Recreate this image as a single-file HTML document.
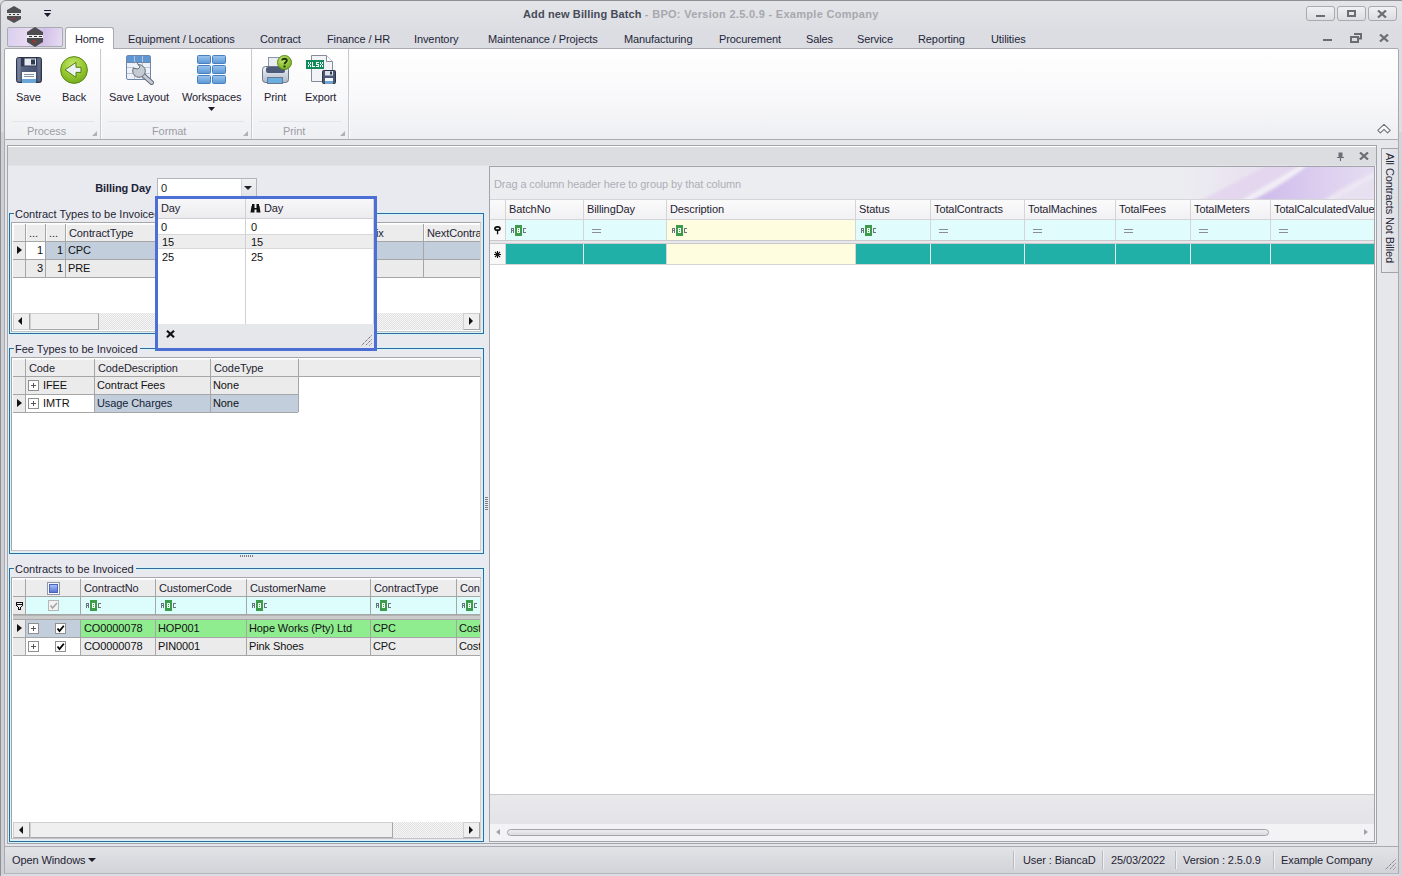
<!DOCTYPE html>
<html><head><meta charset="utf-8">
<style>
*{margin:0;padding:0;box-sizing:border-box}
html,body{width:1402px;height:876px;overflow:hidden;background:#dcdde2}
body{font-family:"Liberation Sans",sans-serif;font-size:11px;color:#1e1e1e;position:relative}
.a{position:absolute}
.t{position:absolute;white-space:nowrap;line-height:13px;letter-spacing:-.1px}
</style></head><body>
<div class="a" style="left:0px;top:0px;width:1405px;height:878px;background:linear-gradient(#e4e5e9,#dcdde2 30px,#dcdde2);border:1px solid #8e9096;border-radius:6px 4px 0 0;"></div>
<div class="a" style="left:1px;top:132px;width:3px;height:743px;background:#cfd0d5;"></div>
<div class="a" style="left:1399px;top:132px;width:3px;height:744px;background:#d3d4d9;"></div>
<svg class="a" style="left:6px;top:6px" width="16" height="17" viewBox="0 0 16 17">
<polygon points="8,0 15,4 15,13 8,17 1,13 1,4" fill="#505054"/>
<rect x="1" y="7" width="14" height="3" fill="#fff" opacity=".85"/>
<rect x="3" y="8" width="2" height="1" fill="#333"/><rect x="7" y="8" width="2" height="1" fill="#333"/><rect x="11" y="8" width="2" height="1" fill="#333"/>
<circle cx="7" cy="12.5" r="1.5" fill="#8a3a3a"/>
</svg>
<svg class="a" style="left:44px;top:10px" width="8" height="8" viewBox="0 0 8 8"><rect x="0" y="0" width="7" height="1" fill="#1a1a2a"/><polygon points="0,3 7,3 3.5,7" fill="#1a1a2a"/></svg>
<div class="t" style="left:523px;top:8px;font-weight:bold;color:#464b5a;letter-spacing:.12px">Add new Billing Batch <span style="color:#a7a8ae;letter-spacing:.3px">- BPO: Version 2.5.0.9 - Example Company</span></div>
<div class="a" style="left:1306px;top:6px;width:29px;height:15px;background:linear-gradient(#f0f1f4,#dcdde2);border:1px solid #a9aab0;border-radius:3px;"></div>
<div class="a" style="left:1337px;top:6px;width:29px;height:15px;background:linear-gradient(#f0f1f4,#dcdde2);border:1px solid #a9aab0;border-radius:3px;"></div>
<div class="a" style="left:1368px;top:6px;width:29px;height:15px;background:linear-gradient(#f0f1f4,#dcdde2);border:1px solid #a9aab0;border-radius:3px;"></div>
<div class="a" style="left:1316px;top:15px;width:9px;height:2px;background:#6b6c73;"></div>
<div class="a" style="left:1347px;top:10px;width:9px;height:7px;background:transparent;border:2px solid #6b6c73;"></div>
<svg class="a" style="left:1377px;top:10px" width="10" height="8" viewBox="0 0 10 8"><path d="M1,0.5 L9,7.5 M9,0.5 L1,7.5" stroke="#6b6c73" stroke-width="2.2"/></svg>
<div class="a" style="left:7px;top:27px;width:56px;height:20px;background:linear-gradient(100deg,#d8d0ee,#e9d9f2 35%,#d3c0e8 65%,#e6dcf2);border:1px solid #a9aab2;border-radius:2px;"></div>
<svg class="a" style="left:26px;top:27px" width="18" height="20" viewBox="0 0 18 20">
<polygon points="9,0 17,5 17,15 9,20 1,15 1,5" fill="#4d4d50"/>
<rect x="1" y="8" width="16" height="3" fill="#fff" opacity=".9"/>
<rect x="3" y="9" width="3" height="1" fill="#333"/><rect x="8" y="9" width="3" height="1" fill="#333"/><rect x="13" y="9" width="3" height="1" fill="#333"/>
<circle cx="8" cy="14.5" r="2" fill="#8a3a3a"/>
</svg>
<div class="a" style="left:4px;top:48px;width:1395px;height:92px;background:linear-gradient(#ffffff,#f8f8fa 55%,#eeeff2);border:1px solid #a9aab0;border-radius:2px 2px 0 0;"></div>
<div class="a" style="left:65px;top:27px;width:49px;height:22px;background:#fff;border:1px solid #a9aab0;border-bottom:none;border-radius:3px 3px 0 0;"></div>
<div class="t" style="left:75px;top:33px;color:#23263a;">Home</div>
<div class="t" style="left:128px;top:33px;color:#23263a;">Equipment / Locations</div>
<div class="t" style="left:260px;top:33px;color:#23263a;">Contract</div>
<div class="t" style="left:327px;top:33px;color:#23263a;">Finance / HR</div>
<div class="t" style="left:414px;top:33px;color:#23263a;">Inventory</div>
<div class="t" style="left:488px;top:33px;color:#23263a;">Maintenance / Projects</div>
<div class="t" style="left:624px;top:33px;color:#23263a;">Manufacturing</div>
<div class="t" style="left:719px;top:33px;color:#23263a;">Procurement</div>
<div class="t" style="left:806px;top:33px;color:#23263a;">Sales</div>
<div class="t" style="left:857px;top:33px;color:#23263a;">Service</div>
<div class="t" style="left:918px;top:33px;color:#23263a;">Reporting</div>
<div class="t" style="left:991px;top:33px;color:#23263a;">Utilities</div>
<div class="a" style="left:1323px;top:39px;width:9px;height:2px;background:#6b6c73;"></div>
<svg class="a" style="left:1350px;top:33px" width="12" height="10" viewBox="0 0 12 10"><path d="M4,1 H11 V5.5 H8 M1,4 H8 V9 H1 Z" stroke="#6b6c73" stroke-width="2" fill="none"/></svg>
<svg class="a" style="left:1379px;top:34px" width="10" height="8" viewBox="0 0 10 8"><path d="M1,0.5 L9,7.5 M9,0.5 L1,7.5" stroke="#6b6c73" stroke-width="2.2"/></svg>
<div class="a" style="left:100px;top:49px;width:1px;height:90px;background:#c9cacf;"></div>
<div class="a" style="left:101px;top:49px;width:1px;height:90px;background:#fbfbfc;"></div>
<div class="a" style="left:251px;top:49px;width:1px;height:90px;background:#c9cacf;"></div>
<div class="a" style="left:252px;top:49px;width:1px;height:90px;background:#fbfbfc;"></div>
<div class="a" style="left:348px;top:49px;width:1px;height:90px;background:#c9cacf;"></div>
<div class="a" style="left:349px;top:49px;width:1px;height:90px;background:#fbfbfc;"></div>
<div class="a" style="left:12px;top:121px;width:82px;height:1px;background:#e4e5e8;"></div>
<div class="a" style="left:108px;top:121px;width:136px;height:1px;background:#e4e5e8;"></div>
<div class="a" style="left:259px;top:121px;width:82px;height:1px;background:#e4e5e8;"></div>
<div class="t" style="left:16px;top:91px;color:#1e2130;">Save</div>
<div class="t" style="left:62px;top:91px;color:#1e2130;">Back</div>
<div class="t" style="left:109px;top:91px;color:#1e2130;">Save Layout</div>
<div class="t" style="left:182px;top:91px;color:#1e2130;">Workspaces</div>
<div class="t" style="left:264px;top:91px;color:#1e2130;">Print</div>
<div class="t" style="left:305px;top:91px;color:#1e2130;">Export</div>
<div class="t" style="left:27px;top:125px;color:#9c9da6;">Process</div>
<div class="t" style="left:152px;top:125px;color:#9c9da6;">Format</div>
<div class="t" style="left:283px;top:125px;color:#9c9da6;">Print</div>
<!-- Save -->
<svg class="a" style="left:16px;top:57px" width="26" height="26" viewBox="0 0 26 26">
<defs><linearGradient id="fl" x1="0" y1="0" x2="1" y2="1"><stop offset="0" stop-color="#6b7894"/><stop offset=".5" stop-color="#4f5b78"/><stop offset="1" stop-color="#3c465f"/></linearGradient></defs>
<rect x=".5" y=".5" width="25" height="25" rx="2" fill="url(#fl)" stroke="#2e3548"/>
<rect x="1.5" y="1.5" width="3" height="23" fill="#8591aa" opacity=".6"/>
<rect x="21.5" y="1.5" width="3" height="23" fill="#8591aa" opacity=".4"/>
<rect x="5" y="0.5" width="16" height="9" rx="1" fill="#2f3650"/>
<rect x="8.5" y="1.5" width="11.5" height="7" fill="#e6eaf0"/>
<rect x="15" y="2.5" width="4" height="5" fill="#2f3a55"/>
<rect x="6" y="15" width="14" height="11" fill="#f7f9fb"/>
<rect x="6" y="22" width="14" height="4" fill="#6aa6d6"/>
<path d="M8,17.5 H18 M8,19.5 H18" stroke="#8a93a5" stroke-width="1"/>
</svg>
<!-- Back -->
<svg class="a" style="left:60px;top:56px" width="28" height="28" viewBox="0 0 28 28">
<defs><radialGradient id="bk" cx=".45" cy=".3" r=".75"><stop offset="0" stop-color="#c5e86a"/><stop offset=".6" stop-color="#92c52e"/><stop offset="1" stop-color="#70a51a"/></radialGradient></defs>
<circle cx="14" cy="14" r="13.4" fill="url(#bk)" stroke="#5a8c16" stroke-width="1"/>
<polygon points="5,13.8 16,6.4 16,11.3 21,11.3 21,16.4 16,16.4 16,21.4" fill="#eef1f4" stroke="#4f7f13" stroke-width="1" stroke-linejoin="round"/>
</svg>
<!-- Save Layout -->
<svg class="a" style="left:125px;top:54px" width="30" height="31" viewBox="0 0 30 31">
<rect x="1.5" y="1.5" width="24" height="24" rx="1.5" fill="#eef2f8" stroke="#6f86a8"/>
<rect x="2" y="2" width="23" height="6" fill="#5f97d2"/>
<path d="M2,13.5 H25 M2,19.5 H25 M9.5,2 V25 M17.5,2 V25" stroke="#b9c5d6" stroke-width="1"/>
<path d="M2,8.5 H25" stroke="#6f86a8"/>
<line x1="17.5" y1="20.5" x2="26.5" y2="28.5" stroke="#656e7a" stroke-width="5" stroke-linecap="round"/>
<line x1="17.5" y1="20.5" x2="26.5" y2="28.5" stroke="#c5cbd3" stroke-width="3" stroke-linecap="round"/>
<circle cx="14" cy="17" r="6.3" fill="#c5cbd3" stroke="#656e7a" stroke-width="1"/>
<polygon points="6.5,12.5 10.5,8.5 15,13 13,15" fill="#eef2f8"/>
<path d="M8.2,14.2 L13,15 L15,13 L12,8.5" stroke="#656e7a" stroke-width="1" fill="none"/>
</svg>
<!-- Workspaces -->
<svg class="a" style="left:197px;top:55px" width="30" height="30" viewBox="0 0 30 30">
<defs><linearGradient id="ws" x1="0" y1="0" x2="0" y2="1"><stop offset="0" stop-color="#9cc6ee"/><stop offset="1" stop-color="#5a97d6"/></linearGradient></defs>
<g fill="url(#ws)" stroke="#4a80bf" stroke-width="1">
<rect x=".5" y=".5" width="13" height="8" rx="1"/><rect x="15.5" y=".5" width="13" height="8" rx="1"/>
<rect x=".5" y="10.5" width="13" height="8" rx="1"/><rect x="15.5" y="10.5" width="13" height="8" rx="1"/>
<rect x=".5" y="20.5" width="13" height="8" rx="1"/><rect x="15.5" y="20.5" width="13" height="8" rx="1"/>
</g></svg>
<svg class="a" style="left:208px;top:107px" width="7" height="4" viewBox="0 0 7 4"><polygon points="0,0 7,0 3.5,4" fill="#1e1e28"/></svg>
<!-- Print -->
<svg class="a" style="left:261px;top:54px" width="32" height="31" viewBox="0 0 32 31">
<defs><linearGradient id="pr" x1="0" y1="0" x2="0" y2="1"><stop offset="0" stop-color="#f2f4f8"/><stop offset="1" stop-color="#aeb8c8"/></linearGradient>
<radialGradient id="qb" cx=".4" cy=".3" r=".8"><stop offset="0" stop-color="#c8e870"/><stop offset="1" stop-color="#6fa61a"/></radialGradient></defs>
<rect x="7.5" y="3.5" width="11" height="11" fill="#e9edf2" stroke="#8a96aa"/>
<rect x="1.5" y="12.5" width="26" height="16" rx="3" fill="url(#pr)" stroke="#6c7890"/>
<rect x="5" y="13" width="19" height="6" rx="2" fill="#4d5a78"/>
<rect x="6.5" y="23.5" width="15" height="6" fill="#6aaee0" stroke="#6c7890"/>
<circle cx="23.5" cy="8.5" r="7" fill="url(#qb)" stroke="#5a8c16"/>
<path d="M21.2,6.6 C21.2,4.2 25.8,4.2 25.8,6.6 C25.8,8.2 23.5,8.4 23.5,10.3" stroke="#1d3a08" stroke-width="1.9" fill="none"/><circle cx="23.5" cy="12.4" r="1.1" fill="#1d3a08"/>
</svg>
<!-- Export -->
<svg class="a" style="left:305px;top:54px" width="32" height="31" viewBox="0 0 32 31">
<path d="M6.5,1.5 H21.5 L27.5,7.5 V27.5 H6.5 Z" fill="#f1f3f6" stroke="#858c99"/>
<path d="M21.5,1.5 V7.5 H27.5" fill="#fff" stroke="#858c99"/>
<rect x="1" y="6" width="18" height="9" fill="#138a5c"/>
<g fill="#f2fbf6"><rect x="3" y="8" width="1" height="1"/><rect x="5" y="8" width="1" height="1"/><rect x="3" y="9" width="1" height="1"/><rect x="5" y="9" width="1" height="1"/><rect x="4" y="10" width="1" height="1"/><rect x="3" y="11" width="1" height="1"/><rect x="5" y="11" width="1" height="1"/><rect x="3" y="12" width="1" height="1"/><rect x="5" y="12" width="1" height="1"/><rect x="7" y="8" width="1" height="1"/><rect x="7" y="9" width="1" height="1"/><rect x="7" y="10" width="1" height="1"/><rect x="7" y="11" width="1" height="1"/><rect x="7" y="12" width="1" height="1"/><rect x="8" y="12" width="1" height="1"/><rect x="9" y="12" width="1" height="1"/><rect x="11" y="8" width="1" height="1"/><rect x="12" y="8" width="1" height="1"/><rect x="13" y="8" width="1" height="1"/><rect x="11" y="9" width="1" height="1"/><rect x="11" y="10" width="1" height="1"/><rect x="12" y="10" width="1" height="1"/><rect x="13" y="10" width="1" height="1"/><rect x="13" y="11" width="1" height="1"/><rect x="11" y="12" width="1" height="1"/><rect x="12" y="12" width="1" height="1"/><rect x="13" y="12" width="1" height="1"/><rect x="15" y="8" width="1" height="1"/><rect x="17" y="8" width="1" height="1"/><rect x="15" y="9" width="1" height="1"/><rect x="17" y="9" width="1" height="1"/><rect x="16" y="10" width="1" height="1"/><rect x="15" y="11" width="1" height="1"/><rect x="17" y="11" width="1" height="1"/><rect x="15" y="12" width="1" height="1"/><rect x="17" y="12" width="1" height="1"/></g>
<rect x="17.5" y="16.5" width="13" height="13" rx="1" fill="#4b5673" stroke="#2e3548"/>
<rect x="20" y="17" width="8" height="4.5" fill="#dde2ea"/><rect x="25" y="17.5" width="2" height="3" fill="#2f3a55"/>
<rect x="20" y="24" width="8" height="5.5" fill="#f4f6f9"/><rect x="20" y="27" width="8" height="2.5" fill="#6aa6d6"/>
</svg>
<!-- ribbon collapse chevron -->
<svg class="a" style="left:1376px;top:122px" width="16" height="12" viewBox="0 0 16 12"><polygon points="8,2.3 14.2,8.3 11.6,10.8 8,7.3 4.4,10.8 1.8,8.3" fill="#fafafc" stroke="#707178" stroke-width="1.1" stroke-linejoin="round"/></svg>
<div class="a" style="left:92px;top:131px;width:0;height:0;border-left:5px solid transparent;border-bottom:5px solid #b0b1b7"></div>
<div class="a" style="left:243px;top:131px;width:0;height:0;border-left:5px solid transparent;border-bottom:5px solid #b0b1b7"></div>
<div class="a" style="left:340px;top:131px;width:0;height:0;border-left:5px solid transparent;border-bottom:5px solid #b0b1b7"></div>



<div class="a" style="left:4px;top:140px;width:1395px;height:707px;background:#e4e5ea;border-left:1px solid #a9aab0;border-right:1px solid #a9aab0;"></div>
<div class="a" style="left:5px;top:140px;width:1393px;height:5px;background:#e6e7ea;"></div>
<div class="a" style="left:7px;top:145px;width:1370px;height:699px;background:#e9eaef;border:1px solid #a3a4aa;"></div>
<div class="a" style="left:1375px;top:166px;width:1px;height:676px;background:#f4f4f6;"></div>
<div class="a" style="left:8px;top:146px;width:1368px;height:19px;background:#dcdde1;border-top:1px solid #fff;"></div>
<div class="a" style="left:8px;top:165px;width:1368px;height:1px;background:#e2e3e7;"></div>
<svg class="a" style="left:1336px;top:152px" width="9" height="9" viewBox="0 0 9 9"><rect x="2.5" y="0.5" width="4" height="5" fill="#6d6e75"/><path d="M1,5.5 H8 M4.5,5.5 V9" stroke="#6d6e75" stroke-width="1.2"/></svg>
<svg class="a" style="left:1359px;top:152px" width="10" height="8" viewBox="0 0 10 8"><path d="M1,0.5 L9,7.5 M9,0.5 L1,7.5" stroke="#6d6e75" stroke-width="2.2"/></svg>
<div class="a" style="left:1377px;top:145px;width:21px;height:700px;background:#e6e7eb;"></div>
<div class="a" style="left:1381px;top:148px;width:17px;height:125px;background:linear-gradient(90deg,#e9eaee,#dfe0e4);border:1px solid #a3a4aa;border-right:none;"></div>
<div class="t" style="left:1383px;top:153px;width:14px;height:118px;writing-mode:vertical-rl;line-height:14px;color:#1f2433">All Contracts Not Billed</div>
<div class="t" style="left:71px;width:80px;text-align:right;top:182px;color:#1b2236;font-weight:bold">Billing Day</div>
<div class="a" style="left:157px;top:178px;width:100px;height:19px;background:#fff;border:1px solid #b3b5bb;"></div>
<div class="a" style="left:241px;top:179px;width:15px;height:17px;background:linear-gradient(#f2f2f4,#e2e3e7);border-left:1px solid #d5d6da;"></div>
<div class="a" style="left:244px;top:186px;width:0;height:0;border-left:4.0px solid transparent;border-right:4.0px solid transparent;border-top:4px solid #222"></div>
<div class="t" style="left:161px;top:182px;color:#1e1e1e;">0</div>
<div class="a" style="left:8px;top:212px;width:477px;height:123px;background:transparent;border:1px solid #d5f3fb;"></div>
<div class="a" style="left:9px;top:213px;width:475px;height:121px;background:transparent;border:1px solid #336a9c;"></div>
<div class="a" style="left:10px;top:214px;width:473px;height:119px;background:transparent;border:1px solid #d5f3fb;"></div>
<div class="t" style="left:14px;top:208px;padding:0 2px 0 1px;background:#e9eaef;color:#1f2433;letter-spacing:0">Contract Types to be Invoiced</div>
<div class="a" style="left:8px;top:347px;width:477px;height:208px;background:transparent;border:1px solid #d5f3fb;"></div>
<div class="a" style="left:9px;top:348px;width:475px;height:206px;background:transparent;border:1px solid #336a9c;"></div>
<div class="a" style="left:10px;top:349px;width:473px;height:204px;background:transparent;border:1px solid #d5f3fb;"></div>
<div class="t" style="left:14px;top:343px;padding:0 2px 0 1px;background:#e9eaef;color:#1f2433;letter-spacing:0">Fee Types to be Invoiced</div>
<div class="a" style="left:8px;top:567px;width:477px;height:276px;background:transparent;border:1px solid #d5f3fb;"></div>
<div class="a" style="left:9px;top:568px;width:475px;height:274px;background:transparent;border:1px solid #336a9c;"></div>
<div class="a" style="left:10px;top:569px;width:473px;height:272px;background:transparent;border:1px solid #d5f3fb;"></div>
<div class="t" style="left:14px;top:563px;padding:0 2px 0 1px;background:#e9eaef;color:#1f2433;letter-spacing:0">Contracts to be Invoiced</div>
<div class="a" style="left:11px;top:222px;width:470px;height:110px;background:#fff;border:1px solid #a6a6a6;border-right-color:#cfcfcf;border-bottom-color:#c4c4c4;"></div>
<div class="a" style="left:13px;top:224px;width:467px;height:17px;background:#ececec;"></div>
<div class="a" style="left:13px;top:224px;width:1px;height:17px;background:#fafafa;"></div>
<div class="a" style="left:26px;top:224px;width:1px;height:17px;background:#fafafa;"></div>
<div class="a" style="left:46px;top:224px;width:1px;height:17px;background:#fafafa;"></div>
<div class="a" style="left:66px;top:224px;width:1px;height:17px;background:#fafafa;"></div>
<div class="a" style="left:424px;top:224px;width:1px;height:17px;background:#fafafa;"></div>
<div class="a" style="left:13px;top:224px;width:467px;height:1px;background:#fafafa;"></div>
<div class="a" style="left:13px;top:241px;width:467px;height:1px;background:#a6a6a6;"></div>
<div class="a" style="left:13px;top:242px;width:12px;height:17px;background:#ebebeb;"></div>
<div class="a" style="left:26px;top:242px;width:19px;height:17px;background:#fff;"></div>
<div class="a" style="left:46px;top:242px;width:434px;height:17px;background:#c2cedb;"></div>
<div class="a" style="left:13px;top:259px;width:467px;height:1px;background:#a6a6a6;"></div>
<div class="a" style="left:13px;top:260px;width:467px;height:17px;background:#ebebeb;"></div>
<div class="a" style="left:13px;top:277px;width:467px;height:1px;background:#a6a6a6;"></div>
<div class="a" style="left:25px;top:224px;width:1px;height:53px;background:#a6a6a6;"></div>
<div class="a" style="left:45px;top:224px;width:1px;height:53px;background:#a6a6a6;"></div>
<div class="a" style="left:65px;top:224px;width:1px;height:53px;background:#a6a6a6;"></div>
<div class="a" style="left:423px;top:224px;width:1px;height:53px;background:#a6a6a6;"></div>
<div class="t" style="left:29px;top:227px;color:#1f2433;">...</div>
<div class="t" style="left:49px;top:227px;color:#1f2433;">...</div>
<div class="t" style="left:69px;top:227px;color:#1f2433;">ContractType</div>
<div class="t" style="left:373px;top:227px;color:#1f2433;">fix</div>
<div class="t" style="left:427px;top:227px;color:#1f2433;width:53px;overflow:hidden">NextContra</div>
<div class="t" style="left:28px;width:15px;text-align:right;top:244px;color:#111;">1</div>
<div class="t" style="left:48px;width:15px;text-align:right;top:244px;color:#111;">1</div>
<div class="t" style="left:68px;top:244px;color:#111;">CPC</div>
<div class="t" style="left:28px;width:15px;text-align:right;top:262px;color:#111;">3</div>
<div class="t" style="left:48px;width:15px;text-align:right;top:262px;color:#111;">1</div>
<div class="t" style="left:68px;top:262px;color:#111;">PRE</div>
<div class="a" style="left:17px;top:246px;width:0;height:0;border-top:4.5px solid transparent;border-bottom:4.5px solid transparent;border-left:5px solid #111"></div>
<div class="a" style="left:13px;top:313px;width:467px;height:17px;background:repeating-conic-gradient(#e2e2e2 0 25%,#f5f5f5 0 50%) 0 0/2px 2px;"></div>
<div class="a" style="left:13px;top:313px;width:17px;height:17px;background:#efefef;border:1px solid #d0d0d0;border-right-color:#a8a8a8;"></div>
<div class="a" style="left:30px;top:313px;width:69px;height:17px;background:#efefef;border:1px solid #d0d0d0;border-right-color:#a8a8a8;border-bottom-color:#a8a8a8"></div>
<div class="a" style="left:463px;top:313px;width:17px;height:17px;background:#efefef;border:1px solid #d0d0d0;border-right-color:#a8a8a8;border-bottom-color:#a8a8a8"></div>
<div class="a" style="left:18px;top:317px;width:0;height:0;border-top:4.0px solid transparent;border-bottom:4.0px solid transparent;border-right:4px solid #111"></div>
<div class="a" style="left:469px;top:317px;width:0;height:0;border-top:4.0px solid transparent;border-bottom:4.0px solid transparent;border-left:4px solid #111"></div>
<div class="a" style="left:11px;top:357px;width:470px;height:194px;background:#fff;border:1px solid #a6a6a6;border-right-color:#cfcfcf;border-bottom-color:#c4c4c4;"></div>
<div class="a" style="left:13px;top:359px;width:467px;height:17px;background:#ececec;"></div>
<div class="a" style="left:13px;top:359px;width:467px;height:1px;background:#fafafa;"></div>
<div class="a" style="left:13px;top:376px;width:467px;height:1px;background:#a6a6a6;"></div>
<div class="a" style="left:13px;top:377px;width:12px;height:17px;background:#ebebeb;"></div>
<div class="a" style="left:26px;top:377px;width:272px;height:17px;background:#ebebeb;"></div>
<div class="a" style="left:13px;top:394px;width:285px;height:1px;background:#a6a6a6;"></div>
<div class="a" style="left:13px;top:395px;width:12px;height:17px;background:#ebebeb;"></div>
<div class="a" style="left:26px;top:395px;width:68px;height:17px;background:#fff;"></div>
<div class="a" style="left:95px;top:395px;width:203px;height:17px;background:#c2cedb;"></div>
<div class="a" style="left:13px;top:412px;width:285px;height:1px;background:#a6a6a6;"></div>
<div class="a" style="left:25px;top:359px;width:1px;height:53px;background:#a6a6a6;"></div>
<div class="a" style="left:94px;top:359px;width:1px;height:53px;background:#a6a6a6;"></div>
<div class="a" style="left:210px;top:359px;width:1px;height:53px;background:#a6a6a6;"></div>
<div class="a" style="left:298px;top:359px;width:1px;height:17px;background:#a6a6a6;"></div>
<div class="a" style="left:298px;top:377px;width:1px;height:35px;background:#a6a6a6;"></div>
<div class="t" style="left:29px;top:362px;color:#1f2433;">Code</div>
<div class="t" style="left:98px;top:362px;color:#1f2433;">CodeDescription</div>
<div class="t" style="left:214px;top:362px;color:#1f2433;">CodeType</div>
<div class="t" style="left:43px;top:379px;color:#111;">IFEE</div>
<div class="t" style="left:97px;top:379px;color:#111;">Contract Fees</div>
<div class="t" style="left:213px;top:379px;color:#111;">None</div>
<div class="t" style="left:43px;top:397px;color:#111;">IMTR</div>
<div class="t" style="left:97px;top:397px;color:#14243a;">Usage Charges</div>
<div class="t" style="left:213px;top:397px;color:#111;">None</div>
<div class="a" style="left:28px;top:380px;width:11px;height:11px;background:#fff;border:1px solid #8f8f8f;"></div>
<div class="a" style="left:31px;top:385px;width:5px;height:1px;background:#555;"></div>
<div class="a" style="left:33px;top:383px;width:1px;height:5px;background:#555;"></div>
<div class="a" style="left:28px;top:398px;width:11px;height:11px;background:#fff;border:1px solid #8f8f8f;"></div>
<div class="a" style="left:31px;top:403px;width:5px;height:1px;background:#555;"></div>
<div class="a" style="left:33px;top:401px;width:1px;height:5px;background:#555;"></div>
<div class="a" style="left:17px;top:399px;width:0;height:0;border-top:4.5px solid transparent;border-bottom:4.5px solid transparent;border-left:5px solid #111"></div>
<div class="a" style="left:240px;top:555px;width:1px;height:2px;background:#7d7e84;"></div>
<div class="a" style="left:242px;top:555px;width:1px;height:2px;background:#7d7e84;"></div>
<div class="a" style="left:244px;top:555px;width:1px;height:2px;background:#7d7e84;"></div>
<div class="a" style="left:246px;top:555px;width:1px;height:2px;background:#7d7e84;"></div>
<div class="a" style="left:248px;top:555px;width:1px;height:2px;background:#7d7e84;"></div>
<div class="a" style="left:250px;top:555px;width:1px;height:2px;background:#7d7e84;"></div>
<div class="a" style="left:252px;top:555px;width:1px;height:2px;background:#7d7e84;"></div>
<div class="a" style="left:485px;top:497px;width:3px;height:1px;background:#7d7e84;"></div>
<div class="a" style="left:485px;top:499px;width:3px;height:1px;background:#7d7e84;"></div>
<div class="a" style="left:485px;top:501px;width:3px;height:1px;background:#7d7e84;"></div>
<div class="a" style="left:485px;top:503px;width:3px;height:1px;background:#7d7e84;"></div>
<div class="a" style="left:485px;top:505px;width:3px;height:1px;background:#7d7e84;"></div>
<div class="a" style="left:485px;top:507px;width:3px;height:1px;background:#7d7e84;"></div>
<div class="a" style="left:485px;top:509px;width:3px;height:1px;background:#7d7e84;"></div>
<div class="a" style="left:11px;top:577px;width:470px;height:262px;background:#fff;border:1px solid #a6a6a6;border-right-color:#cfcfcf;border-bottom-color:#c4c4c4;"></div>
<div class="a" style="left:13px;top:579px;width:467px;height:17px;background:#ececec;"></div>
<div class="a" style="left:13px;top:579px;width:467px;height:1px;background:#fafafa;"></div>
<div class="a" style="left:13px;top:596px;width:467px;height:1px;background:#a6a6a6;"></div>
<div class="a" style="left:13px;top:597px;width:12px;height:17px;background:#ebebeb;"></div>
<div class="a" style="left:26px;top:597px;width:454px;height:17px;background:#ddfdfd;"></div>
<div class="a" style="left:13px;top:614px;width:467px;height:1px;background:#a6a6a6;"></div>
<div class="a" style="left:13px;top:615px;width:467px;height:5px;background:#cbcbcb;"></div>
<div class="a" style="left:13px;top:615px;width:467px;height:1px;background:#b2b2b2;"></div>
<div class="a" style="left:13px;top:619px;width:467px;height:1px;background:#a8a8a8;"></div>
<div class="a" style="left:13px;top:620px;width:12px;height:17px;background:#ebebeb;"></div>
<div class="a" style="left:26px;top:620px;width:54px;height:17px;background:#c2cedb;"></div>
<div class="a" style="left:81px;top:620px;width:399px;height:17px;background:#8fec8f;"></div>
<div class="a" style="left:13px;top:637px;width:467px;height:1px;background:#a6a6a6;"></div>
<div class="a" style="left:13px;top:638px;width:12px;height:17px;background:#ebebeb;"></div>
<div class="a" style="left:26px;top:638px;width:54px;height:17px;background:#fff;"></div>
<div class="a" style="left:81px;top:638px;width:399px;height:17px;background:#ebebeb;"></div>
<div class="a" style="left:13px;top:655px;width:467px;height:1px;background:#a6a6a6;"></div>
<div class="a" style="left:25px;top:579px;width:1px;height:35px;background:#a6a6a6;"></div>
<div class="a" style="left:25px;top:620px;width:1px;height:35px;background:#a6a6a6;"></div>
<div class="a" style="left:80px;top:579px;width:1px;height:35px;background:#a6a6a6;"></div>
<div class="a" style="left:80px;top:620px;width:1px;height:35px;background:#a6a6a6;"></div>
<div class="a" style="left:155px;top:579px;width:1px;height:35px;background:#a6a6a6;"></div>
<div class="a" style="left:155px;top:620px;width:1px;height:35px;background:#a6a6a6;"></div>
<div class="a" style="left:246px;top:579px;width:1px;height:35px;background:#a6a6a6;"></div>
<div class="a" style="left:246px;top:620px;width:1px;height:35px;background:#a6a6a6;"></div>
<div class="a" style="left:370px;top:579px;width:1px;height:35px;background:#a6a6a6;"></div>
<div class="a" style="left:370px;top:620px;width:1px;height:35px;background:#a6a6a6;"></div>
<div class="a" style="left:456px;top:579px;width:1px;height:35px;background:#a6a6a6;"></div>
<div class="a" style="left:456px;top:620px;width:1px;height:35px;background:#a6a6a6;"></div>
<div class="t" style="left:84px;top:582px;color:#1f2433;">ContractNo</div>
<div class="t" style="left:159px;top:582px;color:#1f2433;">CustomerCode</div>
<div class="t" style="left:250px;top:582px;color:#1f2433;">CustomerName</div>
<div class="t" style="left:374px;top:582px;color:#1f2433;">ContractType</div>
<div class="t" style="left:460px;top:582px;color:#1f2433;width:20px;overflow:hidden">Con</div>
<div class="t" style="left:84px;top:622px;color:#111;">CO0000078</div>
<div class="t" style="left:158px;top:622px;color:#111;">HOP001</div>
<div class="t" style="left:249px;top:622px;color:#111;">Hope Works (Pty) Ltd</div>
<div class="t" style="left:373px;top:622px;color:#111;">CPC</div>
<div class="t" style="left:459px;top:622px;color:#111;width:21px;overflow:hidden">Cost</div>
<div class="t" style="left:84px;top:640px;color:#111;">CO0000078</div>
<div class="t" style="left:158px;top:640px;color:#111;">PIN0001</div>
<div class="t" style="left:249px;top:640px;color:#111;">Pink Shoes</div>
<div class="t" style="left:373px;top:640px;color:#111;">CPC</div>
<div class="t" style="left:459px;top:640px;color:#111;width:21px;overflow:hidden">Cost</div>
<div class="a" style="left:47px;top:582px;width:13px;height:13px;background:#f5f7fb;border:1px solid #8e98aa;"></div>
<div class="a" style="left:49px;top:584px;width:9px;height:9px;background:linear-gradient(#a9bdf2,#5876d8);border:1px solid #4b64ba;"></div>
<div class="a" style="left:48px;top:600px;width:11px;height:11px;background:#f2f2f2;border:1px solid #b5b5b5;"></div>
<svg class="a" style="left:49px;top:601px" width="9" height="9" viewBox="0 0 9 9"><path d="M1.5,4.5 L3.5,7 L8,2" stroke="#a5a5a5" stroke-width="1.6" fill="none"/></svg>
<svg class="a" style="left:16px;top:602px" width="7" height="8" viewBox="0 0 7 8" shape-rendering="crispEdges"><g fill="#111"><rect x="0" y="0" width="1" height="1"/><rect x="1" y="0" width="1" height="1"/><rect x="2" y="0" width="1" height="1"/><rect x="3" y="0" width="1" height="1"/><rect x="4" y="0" width="1" height="1"/><rect x="5" y="0" width="1" height="1"/><rect x="6" y="0" width="1" height="1"/><rect x="0" y="1" width="1" height="1"/><rect x="6" y="1" width="1" height="1"/><rect x="0" y="2" width="1" height="1"/><rect x="1" y="2" width="1" height="1"/><rect x="2" y="2" width="1" height="1"/><rect x="3" y="2" width="1" height="1"/><rect x="4" y="2" width="1" height="1"/><rect x="5" y="2" width="1" height="1"/><rect x="6" y="2" width="1" height="1"/><rect x="0" y="3" width="1" height="1"/><rect x="6" y="3" width="1" height="1"/><rect x="1" y="4" width="1" height="1"/><rect x="5" y="4" width="1" height="1"/><rect x="2" y="5" width="1" height="1"/><rect x="4" y="5" width="1" height="1"/><rect x="2" y="6" width="1" height="1"/><rect x="4" y="6" width="1" height="1"/><rect x="2" y="7" width="1" height="1"/><rect x="3" y="7" width="1" height="1"/><rect x="4" y="7" width="1" height="1"/></g></svg>
<div class="a" style="left:28px;top:623px;width:11px;height:11px;background:#fff;border:1px solid #8f8f8f;"></div>
<div class="a" style="left:31px;top:628px;width:5px;height:1px;background:#555;"></div>
<div class="a" style="left:33px;top:626px;width:1px;height:5px;background:#555;"></div>
<div class="a" style="left:55px;top:623px;width:11px;height:11px;background:#fff;border:1px solid #8f8f8f;"></div>
<svg class="a" style="left:56px;top:624px" width="9" height="9" viewBox="0 0 9 9"><path d="M1.5,4.5 L3.5,7 L7.8,1.8" stroke="#000" stroke-width="1.8" fill="none"/></svg>
<div class="a" style="left:28px;top:641px;width:11px;height:11px;background:#fff;border:1px solid #8f8f8f;"></div>
<div class="a" style="left:31px;top:646px;width:5px;height:1px;background:#555;"></div>
<div class="a" style="left:33px;top:644px;width:1px;height:5px;background:#555;"></div>
<div class="a" style="left:55px;top:641px;width:11px;height:11px;background:#fff;border:1px solid #8f8f8f;"></div>
<svg class="a" style="left:56px;top:642px" width="9" height="9" viewBox="0 0 9 9"><path d="M1.5,4.5 L3.5,7 L7.8,1.8" stroke="#000" stroke-width="1.8" fill="none"/></svg>
<div class="a" style="left:17px;top:624px;width:0;height:0;border-top:4.5px solid transparent;border-bottom:4.5px solid transparent;border-left:5px solid #111"></div>
<svg class="a" style="left:85px;top:600px" width="17" height="11" viewBox="0 0 17 11" shape-rendering="crispEdges"><rect x="5" y="0" width="7" height="11" rx="1" fill="#3c9c4a"/><g fill="#6a737d"><rect x="1" y="3" width="1" height="1"/><rect x="2" y="3" width="1" height="1"/><rect x="3" y="3" width="1" height="1"/><rect x="1" y="4" width="1" height="1"/><rect x="3" y="4" width="1" height="1"/><rect x="1" y="5" width="1" height="1"/><rect x="2" y="5" width="1" height="1"/><rect x="3" y="5" width="1" height="1"/><rect x="1" y="6" width="1" height="1"/><rect x="3" y="6" width="1" height="1"/><rect x="1" y="7" width="1" height="1"/><rect x="3" y="7" width="1" height="1"/><rect x="13" y="3" width="1" height="1"/><rect x="14" y="3" width="1" height="1"/><rect x="15" y="3" width="1" height="1"/><rect x="13" y="4" width="1" height="1"/><rect x="13" y="5" width="1" height="1"/><rect x="13" y="6" width="1" height="1"/><rect x="13" y="7" width="1" height="1"/><rect x="14" y="7" width="1" height="1"/><rect x="15" y="7" width="1" height="1"/></g><g fill="#f2fff4"><rect x="7" y="3" width="1" height="1"/><rect x="8" y="3" width="1" height="1"/><rect x="9" y="3" width="1" height="1"/><rect x="7" y="4" width="1" height="1"/><rect x="9" y="4" width="1" height="1"/><rect x="7" y="5" width="1" height="1"/><rect x="8" y="5" width="1" height="1"/><rect x="9" y="5" width="1" height="1"/><rect x="7" y="6" width="1" height="1"/><rect x="9" y="6" width="1" height="1"/><rect x="7" y="7" width="1" height="1"/><rect x="8" y="7" width="1" height="1"/><rect x="9" y="7" width="1" height="1"/></g></svg>
<svg class="a" style="left:160px;top:600px" width="17" height="11" viewBox="0 0 17 11" shape-rendering="crispEdges"><rect x="5" y="0" width="7" height="11" rx="1" fill="#3c9c4a"/><g fill="#6a737d"><rect x="1" y="3" width="1" height="1"/><rect x="2" y="3" width="1" height="1"/><rect x="3" y="3" width="1" height="1"/><rect x="1" y="4" width="1" height="1"/><rect x="3" y="4" width="1" height="1"/><rect x="1" y="5" width="1" height="1"/><rect x="2" y="5" width="1" height="1"/><rect x="3" y="5" width="1" height="1"/><rect x="1" y="6" width="1" height="1"/><rect x="3" y="6" width="1" height="1"/><rect x="1" y="7" width="1" height="1"/><rect x="3" y="7" width="1" height="1"/><rect x="13" y="3" width="1" height="1"/><rect x="14" y="3" width="1" height="1"/><rect x="15" y="3" width="1" height="1"/><rect x="13" y="4" width="1" height="1"/><rect x="13" y="5" width="1" height="1"/><rect x="13" y="6" width="1" height="1"/><rect x="13" y="7" width="1" height="1"/><rect x="14" y="7" width="1" height="1"/><rect x="15" y="7" width="1" height="1"/></g><g fill="#f2fff4"><rect x="7" y="3" width="1" height="1"/><rect x="8" y="3" width="1" height="1"/><rect x="9" y="3" width="1" height="1"/><rect x="7" y="4" width="1" height="1"/><rect x="9" y="4" width="1" height="1"/><rect x="7" y="5" width="1" height="1"/><rect x="8" y="5" width="1" height="1"/><rect x="9" y="5" width="1" height="1"/><rect x="7" y="6" width="1" height="1"/><rect x="9" y="6" width="1" height="1"/><rect x="7" y="7" width="1" height="1"/><rect x="8" y="7" width="1" height="1"/><rect x="9" y="7" width="1" height="1"/></g></svg>
<svg class="a" style="left:251px;top:600px" width="17" height="11" viewBox="0 0 17 11" shape-rendering="crispEdges"><rect x="5" y="0" width="7" height="11" rx="1" fill="#3c9c4a"/><g fill="#6a737d"><rect x="1" y="3" width="1" height="1"/><rect x="2" y="3" width="1" height="1"/><rect x="3" y="3" width="1" height="1"/><rect x="1" y="4" width="1" height="1"/><rect x="3" y="4" width="1" height="1"/><rect x="1" y="5" width="1" height="1"/><rect x="2" y="5" width="1" height="1"/><rect x="3" y="5" width="1" height="1"/><rect x="1" y="6" width="1" height="1"/><rect x="3" y="6" width="1" height="1"/><rect x="1" y="7" width="1" height="1"/><rect x="3" y="7" width="1" height="1"/><rect x="13" y="3" width="1" height="1"/><rect x="14" y="3" width="1" height="1"/><rect x="15" y="3" width="1" height="1"/><rect x="13" y="4" width="1" height="1"/><rect x="13" y="5" width="1" height="1"/><rect x="13" y="6" width="1" height="1"/><rect x="13" y="7" width="1" height="1"/><rect x="14" y="7" width="1" height="1"/><rect x="15" y="7" width="1" height="1"/></g><g fill="#f2fff4"><rect x="7" y="3" width="1" height="1"/><rect x="8" y="3" width="1" height="1"/><rect x="9" y="3" width="1" height="1"/><rect x="7" y="4" width="1" height="1"/><rect x="9" y="4" width="1" height="1"/><rect x="7" y="5" width="1" height="1"/><rect x="8" y="5" width="1" height="1"/><rect x="9" y="5" width="1" height="1"/><rect x="7" y="6" width="1" height="1"/><rect x="9" y="6" width="1" height="1"/><rect x="7" y="7" width="1" height="1"/><rect x="8" y="7" width="1" height="1"/><rect x="9" y="7" width="1" height="1"/></g></svg>
<svg class="a" style="left:375px;top:600px" width="17" height="11" viewBox="0 0 17 11" shape-rendering="crispEdges"><rect x="5" y="0" width="7" height="11" rx="1" fill="#3c9c4a"/><g fill="#6a737d"><rect x="1" y="3" width="1" height="1"/><rect x="2" y="3" width="1" height="1"/><rect x="3" y="3" width="1" height="1"/><rect x="1" y="4" width="1" height="1"/><rect x="3" y="4" width="1" height="1"/><rect x="1" y="5" width="1" height="1"/><rect x="2" y="5" width="1" height="1"/><rect x="3" y="5" width="1" height="1"/><rect x="1" y="6" width="1" height="1"/><rect x="3" y="6" width="1" height="1"/><rect x="1" y="7" width="1" height="1"/><rect x="3" y="7" width="1" height="1"/><rect x="13" y="3" width="1" height="1"/><rect x="14" y="3" width="1" height="1"/><rect x="15" y="3" width="1" height="1"/><rect x="13" y="4" width="1" height="1"/><rect x="13" y="5" width="1" height="1"/><rect x="13" y="6" width="1" height="1"/><rect x="13" y="7" width="1" height="1"/><rect x="14" y="7" width="1" height="1"/><rect x="15" y="7" width="1" height="1"/></g><g fill="#f2fff4"><rect x="7" y="3" width="1" height="1"/><rect x="8" y="3" width="1" height="1"/><rect x="9" y="3" width="1" height="1"/><rect x="7" y="4" width="1" height="1"/><rect x="9" y="4" width="1" height="1"/><rect x="7" y="5" width="1" height="1"/><rect x="8" y="5" width="1" height="1"/><rect x="9" y="5" width="1" height="1"/><rect x="7" y="6" width="1" height="1"/><rect x="9" y="6" width="1" height="1"/><rect x="7" y="7" width="1" height="1"/><rect x="8" y="7" width="1" height="1"/><rect x="9" y="7" width="1" height="1"/></g></svg>
<svg class="a" style="left:461px;top:600px" width="17" height="11" viewBox="0 0 17 11" shape-rendering="crispEdges"><rect x="5" y="0" width="7" height="11" rx="1" fill="#3c9c4a"/><g fill="#6a737d"><rect x="1" y="3" width="1" height="1"/><rect x="2" y="3" width="1" height="1"/><rect x="3" y="3" width="1" height="1"/><rect x="1" y="4" width="1" height="1"/><rect x="3" y="4" width="1" height="1"/><rect x="1" y="5" width="1" height="1"/><rect x="2" y="5" width="1" height="1"/><rect x="3" y="5" width="1" height="1"/><rect x="1" y="6" width="1" height="1"/><rect x="3" y="6" width="1" height="1"/><rect x="1" y="7" width="1" height="1"/><rect x="3" y="7" width="1" height="1"/><rect x="13" y="3" width="1" height="1"/><rect x="14" y="3" width="1" height="1"/><rect x="15" y="3" width="1" height="1"/><rect x="13" y="4" width="1" height="1"/><rect x="13" y="5" width="1" height="1"/><rect x="13" y="6" width="1" height="1"/><rect x="13" y="7" width="1" height="1"/><rect x="14" y="7" width="1" height="1"/><rect x="15" y="7" width="1" height="1"/></g><g fill="#f2fff4"><rect x="7" y="3" width="1" height="1"/><rect x="8" y="3" width="1" height="1"/><rect x="9" y="3" width="1" height="1"/><rect x="7" y="4" width="1" height="1"/><rect x="9" y="4" width="1" height="1"/><rect x="7" y="5" width="1" height="1"/><rect x="8" y="5" width="1" height="1"/><rect x="9" y="5" width="1" height="1"/><rect x="7" y="6" width="1" height="1"/><rect x="9" y="6" width="1" height="1"/><rect x="7" y="7" width="1" height="1"/><rect x="8" y="7" width="1" height="1"/><rect x="9" y="7" width="1" height="1"/></g></svg>
<div class="a" style="left:13px;top:822px;width:467px;height:16px;background:repeating-conic-gradient(#e2e2e2 0 25%,#f5f5f5 0 50%) 0 0/2px 2px;"></div>
<div class="a" style="left:13px;top:822px;width:17px;height:16px;background:#efefef;border:1px solid #d0d0d0;border-right-color:#a8a8a8;border-bottom-color:#a8a8a8"></div>
<div class="a" style="left:30px;top:822px;width:363px;height:16px;background:#efefef;border:1px solid #d0d0d0;border-right-color:#a8a8a8;border-bottom-color:#a8a8a8"></div>
<div class="a" style="left:463px;top:822px;width:17px;height:16px;background:#efefef;border:1px solid #d0d0d0;border-right-color:#a8a8a8;border-bottom-color:#a8a8a8"></div>
<div class="a" style="left:19px;top:826px;width:0;height:0;border-top:4.0px solid transparent;border-bottom:4.0px solid transparent;border-right:4px solid #111"></div>
<div class="a" style="left:469px;top:826px;width:0;height:0;border-top:4.0px solid transparent;border-bottom:4.0px solid transparent;border-left:4px solid #111"></div>
<div class="a" style="left:155px;top:196px;width:222px;height:155px;background:#fff;border:3px solid #4b6fd5;"></div>
<div class="a" style="left:158px;top:199px;width:216px;height:19px;background:linear-gradient(#f7f7f9,#ececef);"></div>
<div class="a" style="left:158px;top:218px;width:216px;height:1px;background:#d0d0d4;"></div>
<div class="a" style="left:158px;top:234px;width:215px;height:14px;background:#ededed;"></div>
<div class="a" style="left:158px;top:234px;width:215px;height:1px;background:#d8d8d8;"></div>
<div class="a" style="left:158px;top:248px;width:215px;height:1px;background:#d8d8d8;"></div>
<div class="a" style="left:245px;top:199px;width:1px;height:125px;background:#d0d0d4;"></div>
<div class="a" style="left:373px;top:199px;width:1px;height:125px;background:#d0d0d4;"></div>
<div class="t" style="left:161px;top:202px;color:#1f2433;">Day</div>
<div class="t" style="left:264px;top:202px;color:#1f2433;">Day</div>
<svg class="a" style="left:250px;top:204px" width="11" height="9" viewBox="0 0 11 9"><path d="M0.5,8.5 L1.5,2 H4.5 V4 H6.5 V2 H9.5 L10.5,8.5 H6.5 V5.5 H4.5 V8.5 Z" fill="#111"/><rect x="2" y="0" width="2.5" height="2.2" fill="#111"/><rect x="6.5" y="0" width="2.5" height="2.2" fill="#111"/></svg>
<div class="t" style="left:161px;top:221px;color:#111;">0</div>
<div class="t" style="left:251px;top:221px;color:#111;">0</div>
<div class="t" style="left:162px;top:236px;color:#111;">15</div>
<div class="t" style="left:251px;top:236px;color:#111;">15</div>
<div class="t" style="left:162px;top:251px;color:#111;">25</div>
<div class="t" style="left:251px;top:251px;color:#111;">25</div>
<div class="a" style="left:158px;top:324px;width:216px;height:24px;background:#e6e7eb;"></div>
<svg class="a" style="left:166px;top:330px" width="9" height="8" viewBox="0 0 9 8"><path d="M1,0.8 L8,7.2 M8,0.8 L1,7.2" stroke="#111" stroke-width="2.2"/></svg>
<svg class="a" style="left:361px;top:335px" width="11" height="11" viewBox="0 0 11 11"><path d="M10.5,0.5 L0.5,10.5 M10.5,4.5 L4.5,10.5 M10.5,8.5 L8.5,10.5" stroke="#55565c" stroke-width="1" stroke-dasharray="1.2,0.9"/></svg>
<div class="a" style="left:489px;top:166px;width:886px;height:676px;background:#fff;border:1px solid #a3a4aa;"></div>
<div class="a" style="left:490px;top:167px;width:884px;height:32px;background:#ecedf1;"></div>
<svg class="a" style="left:1150px;top:167px" width="224" height="32" viewBox="0 0 224 32">
<defs><filter id="bl" x="-20%" y="-50%" width="140%" height="200%"><feGaussianBlur stdDeviation="1.6"/></filter>
<linearGradient id="bgw" x1="0" y1="0" x2="1" y2="0"><stop offset="0" stop-color="#ecedf1" stop-opacity="0"/><stop offset=".4" stop-color="#e9e3f0"/><stop offset="1" stop-color="#e7e0f0"/></linearGradient>
<linearGradient id="pb" x1="0" y1="0" x2="1" y2="0"><stop offset="0" stop-color="#cdb8ea"/><stop offset=".6" stop-color="#ddd0f0"/><stop offset="1" stop-color="#e6ddf2"/></linearGradient></defs>
<rect x="0" y="0" width="224" height="32" fill="url(#bgw)"/>
<g filter="url(#bl)">
<path d="M50,34 L88,34 L150,-2 L118,-2 Z" fill="#e3d3ee" opacity=".85"/>
<path d="M92,34 L100,34 L160,-2 L152,-2 Z" fill="#f4f1f8" opacity=".9"/>
<path d="M101,34 Q128,22 158,-2 L228,-2 L228,4 Q200,14 172,34 Z" fill="url(#pb)"/>
<path d="M174,34 L179,34 L228,8 L228,3 Z" fill="#efe9f6" opacity=".9"/>
</g></svg>
<div class="t" style="left:494px;top:178px;color:#adaeb6;">Drag a column header here to group by that column</div>
<div class="a" style="left:490px;top:199px;width:884px;height:1px;background:#d5d5d9;"></div>
<div class="a" style="left:490px;top:200px;width:884px;height:19px;background:linear-gradient(#fbfbfc,#f1f1f3);"></div>
<div class="a" style="left:490px;top:219px;width:884px;height:1px;background:#d5d5d9;"></div>
<div class="t" style="left:509px;top:203px;color:#1f2230;">BatchNo</div>
<div class="t" style="left:587px;top:203px;color:#1f2230;">BillingDay</div>
<div class="t" style="left:670px;top:203px;color:#1f2230;">Description</div>
<div class="t" style="left:859px;top:203px;color:#1f2230;">Status</div>
<div class="t" style="left:934px;top:203px;color:#1f2230;">TotalContracts</div>
<div class="t" style="left:1028px;top:203px;color:#1f2230;">TotalMachines</div>
<div class="t" style="left:1119px;top:203px;color:#1f2230;">TotalFees</div>
<div class="t" style="left:1194px;top:203px;color:#1f2230;">TotalMeters</div>
<div class="t" style="left:1274px;top:203px;color:#1f2230;width:100px;overflow:hidden">TotalCalculatedValue</div>
<div class="a" style="left:490px;top:220px;width:15px;height:20px;background:#f8f8f9;"></div>
<div class="a" style="left:506px;top:220px;width:868px;height:20px;background:#e0fcfd;"></div>
<div class="a" style="left:667px;top:220px;width:188px;height:20px;background:#fffde0;"></div>
<div class="a" style="left:490px;top:240px;width:884px;height:1px;background:#c9c9cd;"></div>
<div class="a" style="left:490px;top:241px;width:884px;height:2px;background:#e8e8eb;"></div>
<div class="a" style="left:490px;top:243px;width:884px;height:1px;background:#c9c9cd;"></div>
<div class="a" style="left:490px;top:244px;width:15px;height:20px;background:#f8f8f9;"></div>
<div class="a" style="left:506px;top:244px;width:868px;height:20px;background:#20b0a8;"></div>
<div class="a" style="left:667px;top:244px;width:188px;height:20px;background:#fffde0;"></div>
<div class="a" style="left:505px;top:200px;width:1px;height:40px;background:#d5d5d9;"></div>
<div class="a" style="left:583px;top:200px;width:1px;height:40px;background:#d5d5d9;"></div>
<div class="a" style="left:666px;top:200px;width:1px;height:40px;background:#d5d5d9;"></div>
<div class="a" style="left:855px;top:200px;width:1px;height:40px;background:#d5d5d9;"></div>
<div class="a" style="left:930px;top:200px;width:1px;height:40px;background:#d5d5d9;"></div>
<div class="a" style="left:1024px;top:200px;width:1px;height:40px;background:#d5d5d9;"></div>
<div class="a" style="left:1115px;top:200px;width:1px;height:40px;background:#d5d5d9;"></div>
<div class="a" style="left:1190px;top:200px;width:1px;height:40px;background:#d5d5d9;"></div>
<div class="a" style="left:1270px;top:200px;width:1px;height:40px;background:#d5d5d9;"></div>
<div class="a" style="left:583px;top:244px;width:1px;height:20px;background:#e6f4f3;"></div>
<div class="a" style="left:930px;top:244px;width:1px;height:20px;background:#e6f4f3;"></div>
<div class="a" style="left:1024px;top:244px;width:1px;height:20px;background:#e6f4f3;"></div>
<div class="a" style="left:1115px;top:244px;width:1px;height:20px;background:#e6f4f3;"></div>
<div class="a" style="left:1190px;top:244px;width:1px;height:20px;background:#e6f4f3;"></div>
<div class="a" style="left:1270px;top:244px;width:1px;height:20px;background:#e6f4f3;"></div>
<div class="a" style="left:505px;top:244px;width:1px;height:20px;background:#d5d5d9;"></div>
<div class="a" style="left:666px;top:244px;width:1px;height:20px;background:#d5d5d9;"></div>
<div class="a" style="left:855px;top:244px;width:1px;height:20px;background:#d5d5d9;"></div>
<div class="a" style="left:490px;top:264px;width:884px;height:1px;background:#d5d5d9;"></div>
<svg class="a" style="left:494px;top:226px" width="7" height="9" viewBox="0 0 7 9"><ellipse cx="3.5" cy="2.5" rx="2.6" ry="1.7" fill="#eee" stroke="#111" stroke-width="1.7"/><path d="M2,4.2 L3.5,5.5 L5,4.2 Z" fill="#111"/><rect x="2.9" y="4.5" width="1.3" height="3.8" fill="#111"/></svg>
<svg class="a" style="left:494px;top:251px" width="7" height="7" viewBox="0 0 7 7"><path d="M3.5,0 V7 M0,3.5 H7 M1,1 L6,6 M6,1 L1,6" stroke="#111" stroke-width="1.1"/><circle cx="3.5" cy="3.5" r="1.3" fill="#111"/></svg>
<svg class="a" style="left:510px;top:225px" width="17" height="11" viewBox="0 0 17 11" shape-rendering="crispEdges"><rect x="5" y="0" width="7" height="11" rx="1" fill="#3c9c4a"/><g fill="#6a737d"><rect x="1" y="3" width="1" height="1"/><rect x="2" y="3" width="1" height="1"/><rect x="3" y="3" width="1" height="1"/><rect x="1" y="4" width="1" height="1"/><rect x="3" y="4" width="1" height="1"/><rect x="1" y="5" width="1" height="1"/><rect x="2" y="5" width="1" height="1"/><rect x="3" y="5" width="1" height="1"/><rect x="1" y="6" width="1" height="1"/><rect x="3" y="6" width="1" height="1"/><rect x="1" y="7" width="1" height="1"/><rect x="3" y="7" width="1" height="1"/><rect x="13" y="3" width="1" height="1"/><rect x="14" y="3" width="1" height="1"/><rect x="15" y="3" width="1" height="1"/><rect x="13" y="4" width="1" height="1"/><rect x="13" y="5" width="1" height="1"/><rect x="13" y="6" width="1" height="1"/><rect x="13" y="7" width="1" height="1"/><rect x="14" y="7" width="1" height="1"/><rect x="15" y="7" width="1" height="1"/></g><g fill="#f2fff4"><rect x="7" y="3" width="1" height="1"/><rect x="8" y="3" width="1" height="1"/><rect x="9" y="3" width="1" height="1"/><rect x="7" y="4" width="1" height="1"/><rect x="9" y="4" width="1" height="1"/><rect x="7" y="5" width="1" height="1"/><rect x="8" y="5" width="1" height="1"/><rect x="9" y="5" width="1" height="1"/><rect x="7" y="6" width="1" height="1"/><rect x="9" y="6" width="1" height="1"/><rect x="7" y="7" width="1" height="1"/><rect x="8" y="7" width="1" height="1"/><rect x="9" y="7" width="1" height="1"/></g></svg>
<svg class="a" style="left:671px;top:225px" width="17" height="11" viewBox="0 0 17 11" shape-rendering="crispEdges"><rect x="5" y="0" width="7" height="11" rx="1" fill="#3c9c4a"/><g fill="#6a737d"><rect x="1" y="3" width="1" height="1"/><rect x="2" y="3" width="1" height="1"/><rect x="3" y="3" width="1" height="1"/><rect x="1" y="4" width="1" height="1"/><rect x="3" y="4" width="1" height="1"/><rect x="1" y="5" width="1" height="1"/><rect x="2" y="5" width="1" height="1"/><rect x="3" y="5" width="1" height="1"/><rect x="1" y="6" width="1" height="1"/><rect x="3" y="6" width="1" height="1"/><rect x="1" y="7" width="1" height="1"/><rect x="3" y="7" width="1" height="1"/><rect x="13" y="3" width="1" height="1"/><rect x="14" y="3" width="1" height="1"/><rect x="15" y="3" width="1" height="1"/><rect x="13" y="4" width="1" height="1"/><rect x="13" y="5" width="1" height="1"/><rect x="13" y="6" width="1" height="1"/><rect x="13" y="7" width="1" height="1"/><rect x="14" y="7" width="1" height="1"/><rect x="15" y="7" width="1" height="1"/></g><g fill="#f2fff4"><rect x="7" y="3" width="1" height="1"/><rect x="8" y="3" width="1" height="1"/><rect x="9" y="3" width="1" height="1"/><rect x="7" y="4" width="1" height="1"/><rect x="9" y="4" width="1" height="1"/><rect x="7" y="5" width="1" height="1"/><rect x="8" y="5" width="1" height="1"/><rect x="9" y="5" width="1" height="1"/><rect x="7" y="6" width="1" height="1"/><rect x="9" y="6" width="1" height="1"/><rect x="7" y="7" width="1" height="1"/><rect x="8" y="7" width="1" height="1"/><rect x="9" y="7" width="1" height="1"/></g></svg>
<svg class="a" style="left:860px;top:225px" width="17" height="11" viewBox="0 0 17 11" shape-rendering="crispEdges"><rect x="5" y="0" width="7" height="11" rx="1" fill="#3c9c4a"/><g fill="#6a737d"><rect x="1" y="3" width="1" height="1"/><rect x="2" y="3" width="1" height="1"/><rect x="3" y="3" width="1" height="1"/><rect x="1" y="4" width="1" height="1"/><rect x="3" y="4" width="1" height="1"/><rect x="1" y="5" width="1" height="1"/><rect x="2" y="5" width="1" height="1"/><rect x="3" y="5" width="1" height="1"/><rect x="1" y="6" width="1" height="1"/><rect x="3" y="6" width="1" height="1"/><rect x="1" y="7" width="1" height="1"/><rect x="3" y="7" width="1" height="1"/><rect x="13" y="3" width="1" height="1"/><rect x="14" y="3" width="1" height="1"/><rect x="15" y="3" width="1" height="1"/><rect x="13" y="4" width="1" height="1"/><rect x="13" y="5" width="1" height="1"/><rect x="13" y="6" width="1" height="1"/><rect x="13" y="7" width="1" height="1"/><rect x="14" y="7" width="1" height="1"/><rect x="15" y="7" width="1" height="1"/></g><g fill="#f2fff4"><rect x="7" y="3" width="1" height="1"/><rect x="8" y="3" width="1" height="1"/><rect x="9" y="3" width="1" height="1"/><rect x="7" y="4" width="1" height="1"/><rect x="9" y="4" width="1" height="1"/><rect x="7" y="5" width="1" height="1"/><rect x="8" y="5" width="1" height="1"/><rect x="9" y="5" width="1" height="1"/><rect x="7" y="6" width="1" height="1"/><rect x="9" y="6" width="1" height="1"/><rect x="7" y="7" width="1" height="1"/><rect x="8" y="7" width="1" height="1"/><rect x="9" y="7" width="1" height="1"/></g></svg>
<div class="a" style="left:592px;top:229px;width:9px;height:1px;background:#8d8e95;"></div>
<div class="a" style="left:592px;top:232px;width:9px;height:1px;background:#8d8e95;"></div>
<div class="a" style="left:939px;top:229px;width:9px;height:1px;background:#8d8e95;"></div>
<div class="a" style="left:939px;top:232px;width:9px;height:1px;background:#8d8e95;"></div>
<div class="a" style="left:1033px;top:229px;width:9px;height:1px;background:#8d8e95;"></div>
<div class="a" style="left:1033px;top:232px;width:9px;height:1px;background:#8d8e95;"></div>
<div class="a" style="left:1124px;top:229px;width:9px;height:1px;background:#8d8e95;"></div>
<div class="a" style="left:1124px;top:232px;width:9px;height:1px;background:#8d8e95;"></div>
<div class="a" style="left:1199px;top:229px;width:9px;height:1px;background:#8d8e95;"></div>
<div class="a" style="left:1199px;top:232px;width:9px;height:1px;background:#8d8e95;"></div>
<div class="a" style="left:1279px;top:229px;width:9px;height:1px;background:#8d8e95;"></div>
<div class="a" style="left:1279px;top:232px;width:9px;height:1px;background:#8d8e95;"></div>
<div class="a" style="left:490px;top:794px;width:884px;height:30px;background:linear-gradient(#e9e9ec,#e4e4e8);"></div>
<div class="a" style="left:490px;top:794px;width:884px;height:1px;background:#c9c9cd;"></div>
<div class="a" style="left:490px;top:824px;width:884px;height:17px;background:#f3f3f5;"></div>
<div class="a" style="left:507px;top:829px;width:762px;height:7px;background:linear-gradient(#eeeef1,#dcdce0);border:1px solid #a3a4aa;border-radius:4px;"></div>
<div class="a" style="left:496px;top:829px;width:0;height:0;border-top:3.0px solid transparent;border-bottom:3.0px solid transparent;border-right:4px solid #a0a1a8"></div>
<div class="a" style="left:1364px;top:829px;width:0;height:0;border-top:3.0px solid transparent;border-bottom:3.0px solid transparent;border-left:4px solid #a0a1a8"></div>
<div class="a" style="left:4px;top:846px;width:1395px;height:28px;background:linear-gradient(#e2e3e7,#d2d3d8);border:1px solid #a9aab0;border-bottom-color:#b5b6bb;"></div>
<div class="t" style="left:12px;top:854px;color:#1f2433;">Open Windows</div>
<div class="a" style="left:88px;top:858px;width:0;height:0;border-left:4.0px solid transparent;border-right:4.0px solid transparent;border-top:4px solid #1e1e2a"></div>
<div class="a" style="left:1013px;top:851px;width:1px;height:18px;background:#b9bac0;"></div>
<div class="a" style="left:1014px;top:851px;width:1px;height:18px;background:#f0f0f3;"></div>
<div class="a" style="left:1102px;top:851px;width:1px;height:18px;background:#b9bac0;"></div>
<div class="a" style="left:1103px;top:851px;width:1px;height:18px;background:#f0f0f3;"></div>
<div class="a" style="left:1175px;top:851px;width:1px;height:18px;background:#b9bac0;"></div>
<div class="a" style="left:1176px;top:851px;width:1px;height:18px;background:#f0f0f3;"></div>
<div class="a" style="left:1273px;top:851px;width:1px;height:18px;background:#b9bac0;"></div>
<div class="a" style="left:1274px;top:851px;width:1px;height:18px;background:#f0f0f3;"></div>
<div class="t" style="left:1023px;top:854px;color:#1f2433;">User : BiancaD</div>
<div class="t" style="left:1111px;top:854px;color:#1f2433;">25/03/2022</div>
<div class="t" style="left:1183px;top:854px;color:#1f2433;">Version : 2.5.0.9</div>
<div class="t" style="left:1281px;top:854px;color:#1f2433;">Example Company</div>
<svg class="a" style="left:1385px;top:859px" width="11" height="11" viewBox="0 0 11 11"><path d="M10.5,0.5 L0.5,10.5 M10.5,4.5 L4.5,10.5 M10.5,8.5 L8.5,10.5" stroke="#6b6c72" stroke-width="1" stroke-dasharray="1.2,0.9"/></svg>
</body></html>
